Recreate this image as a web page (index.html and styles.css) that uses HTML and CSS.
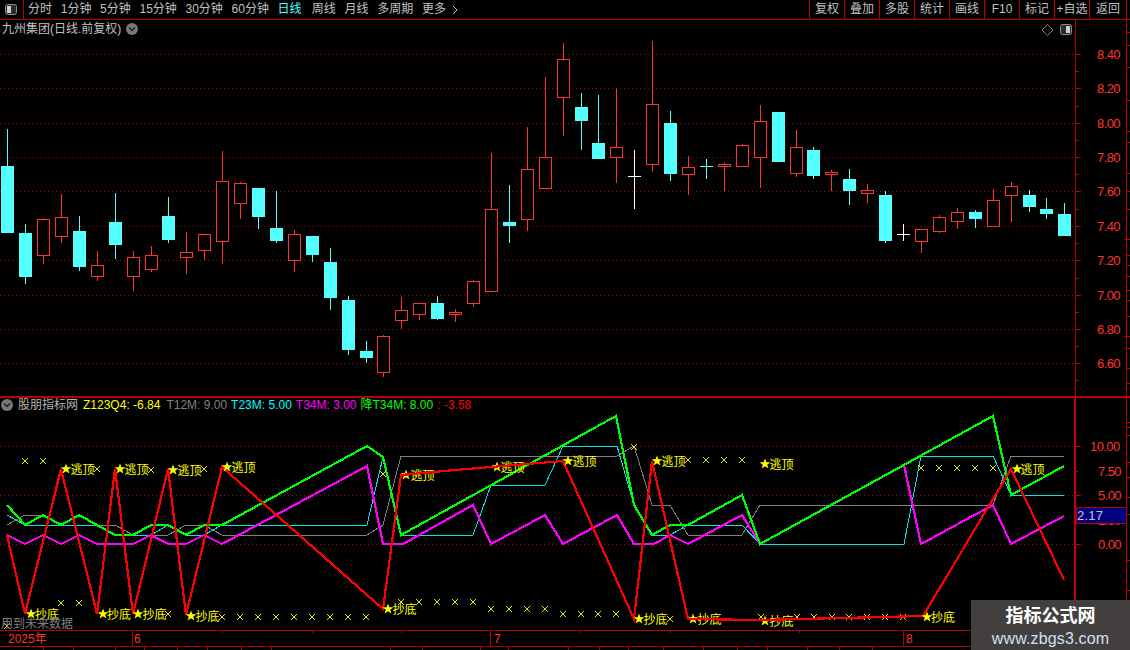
FILE: index.html
```html
<!DOCTYPE html>
<html lang="zh-CN">
<head>
<meta charset="utf-8">
<title>九州集团 日线</title>
<link rel="stylesheet" href="styles.css">
</head>
<body>
<div class="screen">
  <header class="toolbar">
    <div class="toggle">
      <svg class="icon-toggle" viewBox="0 0 12 11"><rect x="0.5" y="0.5" width="11" height="10" rx="2" class="toggle-frame"/><rect x="2" y="2" width="4" height="7" class="toggle-fill"/></svg>
    </div>
    <nav class="periods">
      <span>分时</span><span>1分钟</span><span>5分钟</span><span>15分钟</span><span>30分钟</span><span>60分钟</span><span class="active">日线</span><span>周线</span><span>月线</span><span>多周期</span><span>更多</span>
      <svg class="more" viewBox="0 0 6 10"><path d="M1 1l4 4-4 4" class="more-mark"/></svg>
    </nav>
    <div class="actions">
      <button>复权</button><button>叠加</button><button>多股</button><button>统计</button><button>画线</button><button>F10</button><button>标记</button><button>+自选</button><button class="last">返回</button>
    </div>
  </header>

  <section class="pane price">
    <div class="pane-title">
      <span>九州集团(日线.前复权)</span>
      <svg class="chevron" viewBox="0 0 12 12"><circle cx="6" cy="6" r="6" class="chev-disc"/><path d="M3 4.5l3 3 3-3" class="chev-mark"/></svg>
    </div>
    <svg class="chart chart-price" viewBox="0 20 1130 376">
      <path class="grid" d="M0 54.5H1075M0 88.5H1075M0 123.5H1075M0 157.5H1075M0 191.5H1075M0 226.5H1075M0 260.5H1075M0 295.5H1075M0 329.5H1075M0 363.5H1075"/>
      <path class="wick-red" d="M43.5 218V264M61.5 194V243M97.5 251V281M133.5 251V291M151.5 246V272M186.5 232V274M204.5 234V260M222.5 151V264M240.5 182V219M294.5 230V272M383.5 335V377M401.5 297V329M419.5 303V320M455.5 309V322M473.5 280V307M491.5 153V292M527.5 127V231M545.5 77V189M563.5 43V136M616.5 89V183M652.5 41V172M688.5 156V195M724.5 163V191M742.5 144V167M760.5 105V188M796.5 130V177M831.5 170V191M867.5 184V203M921.5 229V253M939.5 215V233M957.5 208V229M993.5 189V227M1011.5 182V222"/>
      <path class="body-red" d="M37.5 219.5h12v36h-12zM55.5 217.5h12v19h-12zM91.5 265.5h12v11h-12zM127.5 257.5h12v19h-12zM145.5 255.5h12v14h-12zM180.5 252.5h12v5h-12zM198.5 234.5h12v16h-12zM216.5 181.5h12v60h-12zM234.5 183.5h12v20h-12zM288.5 234.5h12v26h-12zM377.5 336.5h12v36h-12zM395.5 310.5h12v10h-12zM413.5 303.5h12v11h-12zM449.5 312.5h12v2h-12zM467.5 281.5h12v22h-12zM485.5 209.5h12v82h-12zM521.5 169.5h12v50h-12zM539.5 157.5h12v31h-12zM557.5 59.5h12v38h-12zM610.5 147.5h12v10h-12zM646.5 104.5h12v60h-12zM682.5 167.5h12v7h-12zM718.5 164.5h12v2h-12zM736.5 145.5h12v21h-12zM754.5 121.5h12v36h-12zM790.5 147.5h12v26h-12zM825.5 172.5h12v2h-12zM861.5 190.5h12v3h-12zM915.5 229.5h12v12h-12zM933.5 217.5h12v14h-12zM951.5 212.5h12v9h-12zM987.5 200.5h12v26h-12zM1005.5 186.5h12v9h-12z"/>
      <path class="wick-cyan" d="M7.5 129V233M25.5 224V284M79.5 216V271M115.5 193V259M168.5 197V243M258.5 188V229M276.5 191V243M312.5 236V262M330.5 248V310M348.5 296V355M366.5 341V363M437.5 296V320M509.5 185V243M581.5 93V150M598.5 95V159M670.5 111V181M706.5 159V179M700 166.5H713M813.5 147V179M849.5 169V205M885.5 191V243M975.5 210V228M1029.5 190V212M1046.5 198V219M1064.5 203V236"/>
      <path class="body-cyan" d="M1 166h13v67h-13zM19 233h13v44h-13zM73 231h13v36h-13zM109 222h13v23h-13zM162 216h13v24h-13zM252 188h13v29h-13zM270 228h13v13h-13zM306 236h13v19h-13zM324 262h13v36h-13zM342 300h13v50h-13zM360 351h13v7h-13zM431 303h13v16h-13zM503 222h13v4h-13zM575 107h13v14h-13zM592 143h13v16h-13zM664 123h13v51h-13zM772 112h13v50h-13zM807 150h13v26h-13zM843 179h13v12h-13zM879 195h13v46h-13zM969 212h13v7h-13zM1023 195h13v12h-13zM1040 209h13v5h-13zM1058 214h13v22h-13z"/>
      <path class="wick-white" d="M634.5 150V209M628 176.5H641M903.5 224V241M897 234.5H910"/>
      <path class="axis" d="M1075.5 20V396M1126.5 20V396M1075 54.5H1081M1075 88.5H1081M1075 123.5H1081M1075 157.5H1081M1075 191.5H1081M1075 226.5H1081M1075 260.5H1081M1075 295.5H1081M1075 329.5H1081M1075 363.5H1081M1075 71.5H1079M1075 106.5H1079M1075 140.5H1079M1075 174.5H1079M1075 209.5H1079M1075 243.5H1079M1075 278.5H1079M1075 312.5H1079M1075 346.5H1079M1075 380.5H1079"/>
      <path class="axis" d="M1127 32H1130M1127 45H1130M1127 67H1130M1127 100H1130M1127 131.5H1130M1127 142.5H1130M1127 173.5H1130M1127 191.5H1130M1127 209.5H1130M1124 239.5H1130M1127 255.5H1130M1127 265.5H1130M1127 276.5H1130M1127 290.5H1130M1127 300.5H1130M1127 316.5H1130M1124 336.5H1130M1127 348.5H1130M1127 368.5H1130M1127 383.5H1130"/>
      <g class="scale">
        <text x="1097" y="59">8.40</text><text x="1097" y="93">8.20</text><text x="1097" y="128">8.00</text><text x="1097" y="162">7.80</text><text x="1097" y="196">7.60</text><text x="1097" y="231">7.40</text><text x="1097" y="265">7.20</text><text x="1097" y="300">7.00</text><text x="1097" y="334">6.80</text><text x="1097" y="368">6.60</text>
      </g>
      <path class="diamond" d="M1047.5 24.5l5.5 5.5-5.5 5.5-5.5-5.5z"/>
      <rect class="toggle-frame" x="1060.5" y="24.5" width="11" height="10" rx="2"/>
      <rect class="toggle-fill" x="1066" y="26" width="4" height="7"/>
    </svg>
  </section>

  <section class="pane indicator">
    <div class="legend">
      <svg class="chevron" viewBox="0 0 12 12"><circle cx="6" cy="6" r="6" class="chev-disc"/><path d="M3 4.5l3 3 3-3" class="chev-mark"/></svg>
      <span class="legend-name">股朋指标网</span>
      <span class="l-yellow">Z123Q4: -6.84</span>
      <span class="l-grey">T12M: 9.00</span>
      <span class="l-cyan">T23M: 5.00</span>
      <span class="l-magenta">T34M: 3.00</span>
      <span class="l-green">降T34M: 8.00</span>
      <span class="l-red">: -3.58</span>
    </div>
    <svg class="chart chart-ind" viewBox="0 398 1130 232">
      <defs>
        <polygon id="star" points="0,-5.5 1.4,-1.8 5.4,-1.7 2.2,0.8 3.4,4.6 0,2.3 -3.4,4.6 -2.2,0.8 -5.4,-1.7 -1.4,-1.8"/>
      </defs>
      <path class="grid" d="M0 446.5H1075M0 495.5H1075M0 544.5H1075"/>
      <polyline class="ln-grey" points="7,525 25,515 43,515 61,525 115,525 133,535 168,535 186,525 204,525 222,535 367,535 383,525 401,456 617,456 634,446 652,505 670,505 688,535 742,535 760,505 993,505 1011,456 1064,456"/>
      <polyline class="ln-cyan" points="7,515 25,525 97,525 115,535 151,535 168,525 186,535 204,535 222,525 367,525 383,457 401,535 473,535 491,485 545,485 563,446 617,446 634,505 652,535 670,535 688,525 742,525 760,544 904,544 921,456 993,456 1011,495 1064,495"/>
      <polyline class="ln-magenta" points="7,535 25,544 43,535 61,544 79,535 97,544 133,544 151,535 168,544 186,544 204,535 222,544 367,466 383,544 403,544 473,505 491,544 545,515 563,544 617,515 634,544 654,544 670,535 688,544 742,515 760,544 904,465 921,544 993,505 1011,544 1064,516"/>
      <polyline class="ln-green" points="7,505 25,525 43,515 61,525 79,515 97,525 115,535 133,535 151,525 168,525 186,535 204,525 222,525 367,446 383,457 401,535 616,416 634,505 652,535 670,525 688,525 742,495 760,544 993,416 1011,495 1064,466"/>
      <g class="marks">
        <use href="#star" x="406" y="475"/><text x="410.5" y="479.5">逃顶</text>
        <use href="#star" x="497" y="467"/><text x="500.5" y="471.5">逃顶</text>
        <use href="#star" x="693" y="619"/><text x="697.5" y="623.5">抄底</text>
        <use href="#star" x="765" y="621"/><text x="769.5" y="625.5">抄底</text>
      </g>
      <path class="cross" d="M22 458l6 6m0-6l-6 6M40 458l6 6m0-6l-6 6M58 600l6 6m0-6l-6 6M76 600l6 6m0-6l-6 6M94 466l6 6m0-6l-6 6M148 467l6 6m0-6l-6 6M201 466l6 6m0-6l-6 6M165 611l6 6m0-6l-6 6M219 614l6 6m0-6l-6 6M4 623l6 6m0-6l-6 6M237 614l6 6m0-6l-6 6M255 614l6 6m0-6l-6 6M273 614l6 6m0-6l-6 6M291 614l6 6m0-6l-6 6M309 614l6 6m0-6l-6 6M327 614l6 6m0-6l-6 6M345 614l6 6m0-6l-6 6M363 614l6 6m0-6l-6 6M380 471l6 6m0-6l-6 6M398 599l6 6m0-6l-6 6M416 599l6 6m0-6l-6 6M434 599l6 6m0-6l-6 6M452 599l6 6m0-6l-6 6M470 599l6 6m0-6l-6 6M488 606l6 6m0-6l-6 6M506 606l6 6m0-6l-6 6M524 606l6 6m0-6l-6 6M542 606l6 6m0-6l-6 6M560 611l6 6m0-6l-6 6M578 611l6 6m0-6l-6 6M595 611l6 6m0-6l-6 6M613 611l6 6m0-6l-6 6M631 444l6 6m0-6l-6 6M667 616l6 6m0-6l-6 6M685 457l6 6m0-6l-6 6M703 457l6 6m0-6l-6 6M721 457l6 6m0-6l-6 6M739 457l6 6m0-6l-6 6M758 614l6 6m0-6l-6 6M794 614l6 6m0-6l-6 6M811 614l6 6m0-6l-6 6M829 614l6 6m0-6l-6 6M846 614l6 6m0-6l-6 6M864 614l6 6m0-6l-6 6M882 614l6 6m0-6l-6 6M900 614l6 6m0-6l-6 6M918 465l6 6m0-6l-6 6M936 465l6 6m0-6l-6 6M954 465l6 6m0-6l-6 6M972 465l6 6m0-6l-6 6M990 465l6 6m0-6l-6 6"/>
      <polyline class="ln-red" points="7,535 25,614 61,469 97,614 115,469 133,614 168,469 186,615 222,467 383,609 401,475 455,470 563,461 634,619 652,461 688,619 760,620 923,616 1011,469 1064,580"/>
      <g class="marks">
        <use href="#star" x="66" y="469"/><text x="70.5" y="473.5">逃顶</text>
        <use href="#star" x="120" y="469"/><text x="124.5" y="473.5">逃顶</text>
        <use href="#star" x="173" y="470"/><text x="177.5" y="474.5">逃顶</text>
        <use href="#star" x="227" y="467"/><text x="231.5" y="471.5">逃顶</text>
        <use href="#star" x="568" y="461"/><text x="572.5" y="465.5">逃顶</text>
        <use href="#star" x="657" y="461"/><text x="661.5" y="465.5">逃顶</text>
        <use href="#star" x="765" y="464"/><text x="769.5" y="468.5">逃顶</text>
        <use href="#star" x="1017" y="469"/><text x="1020.5" y="473.5">逃顶</text>
        <use href="#star" x="31" y="614"/><text x="35" y="618.5">抄底</text>
        <use href="#star" x="103" y="614"/><text x="107" y="618.5">抄底</text>
        <use href="#star" x="138" y="614"/><text x="142.5" y="618.5">抄底</text>
        <use href="#star" x="191" y="616"/><text x="195.5" y="620.5">抄底</text>
        <use href="#star" x="388" y="609"/><text x="392.5" y="613.5">抄底</text>
        <use href="#star" x="639" y="619"/><text x="643.5" y="623.5">抄底</text>
        <use href="#star" x="927" y="617"/><text x="931" y="621.5">抄底</text>
      </g>
      <text class="note" x="1" y="628">用到未来数据</text>
      <path class="axis-thick" d="M1075 398V630"/>
      <path class="axis" d="M1126.5 398V630M1075 446.5H1081M1075 495.5H1081M1075 544.5H1081M1075 471.5H1078M1075 520.5H1078M1127 422.5H1130M1127 427.5H1130M1127 435.5H1130M1127 462.5H1130M1127 477.5H1130M1127 497.5H1130M1127 514.5H1130M1127 560.5H1130M1127 590.5H1130"/>
      <g class="scale">
        <text x="1090" y="451">10.00</text><text x="1098" y="476">7.50</text><text x="1098" y="500">5.00</text><text x="1098" y="525">2.50</text><text x="1098" y="549">0.00</text>
      </g>
      <rect class="cursor-box" x="1076.5" y="507.5" width="50" height="16"/>
      <text class="cursor-text" x="1077" y="520">2.17</text>
    </svg>
  </section>

  <footer class="dates">
    <svg class="chart chart-dates" viewBox="0 630 1130 20">
      <path class="axis" d="M0 630.5H1130M0 646.5H1130M132.5 630V646M490.5 630V646M903.5 630V646M222.5 630V633M312.5 630V633M401.5 630V633M580.5 630V633M670.5 630V633M799.5 630V633M1075.5 630V646M43.5 647V650M73.5 647V650M115.5 647V650M144.5 647V650M177.5 647V650M207.5 647V650M241.5 647V650M271.5 647V650M390.5 647V650M422.5 647V650M480.5 647V650M508.5 647V650M568.5 647V650M599.5 647V650M628.5 647V650M663.5 647V650M703.5 647V650M737.5 647V650M767.5 647V650M807.5 647V650M839.5 647V650M872.5 647V650"/>
      <g class="scale date-text">
        <text x="8" y="643">2025年</text><text x="134" y="643">6</text><text x="494" y="643">7</text><text x="906" y="643">8</text>
      </g>
    </svg>
  </footer>

  <aside class="watermark">
    <strong>指标公式网</strong>
    <span>www.zbgs3.com</span>
  </aside>
</div>
</body>
</html>
```

FILE: styles.css
```css
* { box-sizing: border-box; }
html, body { margin: 0; background: #000; }
body {
  font-family: "Liberation Sans", "Noto Sans CJK SC", sans-serif;
  font-size: 12px;
  color: #c0c0c0;
  overflow: hidden;
}
.screen {
  position: relative;
  width: 1130px;
  height: 650px;
  overflow: hidden;
  background: #000;
  display: flex;
  flex-direction: column;
}

/* toolbar */
.toolbar {
  height: 20px;
  flex: none;
  display: flex;
  align-items: stretch;
  border-bottom: 1px solid #b80000;
  line-height: 19px;
}
.toggle {
  width: 24px;
  border-right: 1px solid #b80000;
  display: flex;
  align-items: center;
  justify-content: center;
  padding-right: 1px;
}
.icon-toggle { width: 12px; height: 11px; display: block; }
.toggle-frame { fill: #2c2c2c; stroke: #8c8c8c; stroke-width: 1; }
.toggle-fill { fill: #d0d0d0; }
.periods {
  display: flex;
  gap: 8.7px;
  padding-left: 4px;
  white-space: nowrap;
}
.periods .active { color: #54ffff; margin-right: 1.5px; }
.more { width: 6px; height: 10px; align-self: center; margin-left: -3px; }
.more-mark { fill: none; stroke: #c0c0c0; stroke-width: 1; }
.actions {
  margin-left: auto;
  margin-right: 3px;
  display: flex;
}
.actions button {
  width: 35px;
  padding: 0;
  margin: 0;
  background: none;
  border: 0;
  border-left: 1px solid #b80000;
  color: #c0c0c0;
  font: inherit;
  line-height: 19px;
  white-space: nowrap;
}
.actions button.last {
  width: 38px;
  border-right: 1px solid #b80000;
}

/* panes */
.pane { position: relative; flex: none; }
.price { height: 376px; }
.indicator { height: 234px; border-top: 2px solid #b80000; }
.chart { display: block; width: 1130px; }
.chart-price { height: 376px; }
.chart-ind { height: 232px; }
.chart-dates { height: 20px; }
.dates { flex: none; height: 20px; }

.pane-title {
  position: absolute;
  left: 2px;
  top: 1px;
  display: flex;
  align-items: center;
  gap: 5px;
  line-height: 16px;
}
.chevron { width: 12px; height: 12px; display: block; flex: none; }
.chev-disc { fill: #787878; }
.chev-mark { fill: none; stroke: #1e1e1e; stroke-width: 1.4; }

.legend {
  position: absolute;
  left: 1px;
  top: 0;
  display: flex;
  align-items: center;
  gap: 4px;
  line-height: 14px;
  white-space: nowrap;
}
.legend-name { margin-left: 1px; color: #b4b4b4; }
.l-yellow { color: #ffff00; margin-left: 1px; margin-right: 2px; }
.l-grey { color: #808080; }
.l-cyan { color: #00ffff; }
.l-magenta { color: #ff00ff; }
.l-green { color: #00ff00; }
.l-red { color: #ff0000; }

/* chart strokes */
.grid { fill: none; stroke: #a00000; stroke-width: 1; stroke-dasharray: 1 3; shape-rendering: crispEdges; }
.wick-red { fill: none; stroke: #ff3232; shape-rendering: crispEdges; }
.body-red { fill: #000; stroke: #ff3232; shape-rendering: crispEdges; }
.wick-cyan { fill: none; stroke: #54ffff; shape-rendering: crispEdges; }
.body-cyan { fill: #54ffff; shape-rendering: crispEdges; }
.wick-white { fill: none; stroke: #fff; shape-rendering: crispEdges; }
.axis { fill: none; stroke: #b80000; shape-rendering: crispEdges; }
.axis-thick { fill: none; stroke: #c00000; stroke-width: 2; shape-rendering: crispEdges; }
.scale text { fill: #ff3232; font-size: 13px; letter-spacing: -.6px; }
.scale.date-text text { font-size: 12px; letter-spacing: 0; }
.diamond { fill: none; stroke: #808080; }

.ln-grey, .ln-cyan, .ln-magenta, .ln-green, .ln-red { fill: none; stroke-linejoin: miter; shape-rendering: crispEdges; }
.ln-grey { stroke: #808080; stroke-width: 1; }
.ln-cyan { stroke: #00e6e6; stroke-width: 1; }
.ln-magenta { stroke: #ff00ff; stroke-width: 2.2; }
.ln-green { stroke: #00ff00; stroke-width: 2.2; }
.ln-red { stroke: #ff0000; stroke-width: 2.2; }
.cross { fill: none; stroke: #e6e600; stroke-width: 1; shape-rendering: crispEdges; }
.marks use { fill: #ffff00; }
.marks text { fill: #ffff00; font-size: 12px; }
.note { fill: #808080; font-size: 12px; }
.cursor-box { fill: #000080; stroke: #b80000; shape-rendering: crispEdges; }
.cursor-text { fill: #c8c8c8; font-size: 13px; letter-spacing: .2px; }

/* watermark */
.watermark {
  position: absolute;
  right: 0;
  bottom: 0;
  width: 159px;
  height: 50px;
  background: #443f3f;
  display: flex;
  flex-direction: column;
  align-items: center;
  padding-top: 3px;
}
.watermark strong {
  color: #fff;
  font-size: 18px;
  line-height: 26px;
  font-weight: 700;
}
.watermark span {
  color: #cfe0f2;
  font-size: 16px;
  line-height: 19px;
  letter-spacing: .15px;
}
```
